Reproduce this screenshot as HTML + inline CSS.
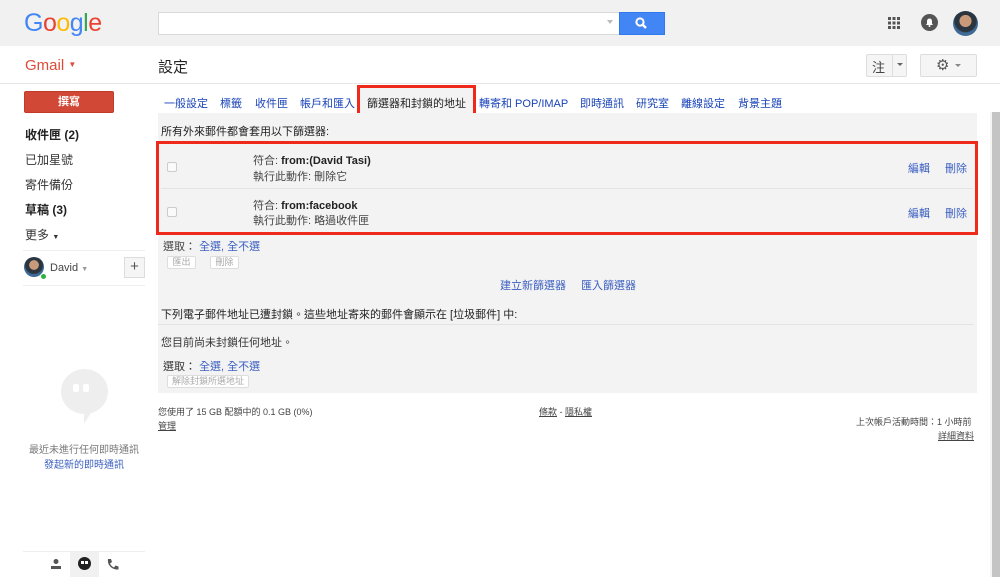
<!DOCTYPE html>
<html><head><meta charset="utf-8"><style>
*{margin:0;padding:0;box-sizing:border-box}
body{width:1000px;height:577px;overflow:hidden;background:#fff;font-family:"Liberation Sans","Noto Sans CJK TC",sans-serif;font-size:11px;color:#222;position:relative}
.a{position:absolute;white-space:nowrap}
.blue{color:#1a44b8}
.lb{color:#3b5fc0}
.btn{position:absolute;border:1px solid #ddd;border-radius:2px;background:#fff;color:#aaa;font-size:9px;text-align:center}
</style></head><body>
<div class="a" style="left:0;top:0;width:1000px;height:46px;background:#f1f1f1"></div>
<div class="a" style="left:24px;top:9px;font-size:25px;letter-spacing:-0.5px;font-family:'Liberation Sans',sans-serif"><span style="color:#4285f4">G</span><span style="color:#ea4335">o</span><span style="color:#fbbc05">o</span><span style="color:#4285f4">g</span><span style="color:#34a853">l</span><span style="color:#ea4335">e</span></div>
<div class="a" style="left:158px;top:12px;width:462px;height:23px;background:#fff;border:1px solid #d9d9d9"></div>
<div class="a" style="left:607px;top:20px;width:0;height:0;border-left:3px solid transparent;border-right:3px solid transparent;border-top:4px solid #bbb"></div>
<div class="a" style="left:619px;top:12px;width:46px;height:23px;background:#4285f4;border:1px solid #3079ed"></div>
<svg class="a" style="left:634px;top:16px" width="16" height="15" viewBox="0 0 16 15"><circle cx="6" cy="6" r="3.6" stroke="#fff" stroke-width="2" fill="none"/><path d="M8.5 8.5L12 12" stroke="#fff" stroke-width="2.4"/></svg>
<svg class="a" style="left:888px;top:17px" width="12" height="12"><g fill="#555"><rect x="0" y="0" width="3" height="3"/><rect x="4.5" y="0" width="3" height="3"/><rect x="9" y="0" width="3" height="3"/><rect x="0" y="4.5" width="3" height="3"/><rect x="4.5" y="4.5" width="3" height="3"/><rect x="9" y="4.5" width="3" height="3"/><rect x="0" y="9" width="3" height="3"/><rect x="4.5" y="9" width="3" height="3"/><rect x="9" y="9" width="3" height="3"/></g></svg>
<svg class="a" style="left:921px;top:14px" width="17" height="17"><circle cx="8.5" cy="8.5" r="8.5" fill="#555"/><path d="M5 11h7l-1-1.5V7a2.5 2.5 0 0 0-5 0v2.5z" fill="#fff"/><circle cx="8.5" cy="12" r="1" fill="#fff"/></svg>
<div class="a" style="left:953px;top:11px;width:25px;height:25px;border-radius:50%;background:radial-gradient(circle at 50% 40%,#c99a7a 0 30%,#2b3540 32% 55%,#3e6a96 60%);"></div>
<div class="a" style="left:0;top:46px;width:1000px;height:38px;border-bottom:1px solid #e5e5e5"></div>
<div class="a" style="left:25px;top:57px;font-size:15px;color:#dd4b39">Gmail <span style="font-size:8px;vertical-align:3px">▼</span></div>
<div class="a" style="left:158px;top:56px;font-size:15px;color:#222">設定</div>
<div class="a" style="left:866px;top:54px;width:41px;height:23px;border:1px solid #ddd;background:#f5f5f5;border-radius:2px"></div>
<div class="a" style="left:872px;top:57px;font-size:13px;color:#444">注</div>
<div class="a" style="left:892px;top:55px;width:1px;height:21px;background:#ddd"></div>
<div class="a" style="left:897px;top:63px;border-left:3px solid transparent;border-right:3px solid transparent;border-top:3px solid #666"></div>
<div class="a" style="left:920px;top:54px;width:57px;height:23px;border:1px solid #ddd;background:#f5f5f5;border-radius:2px"></div>
<div class="a" style="left:936px;top:56px;font-size:15px;color:#555">⚙</div>
<div class="a" style="left:955px;top:64px;border-left:3px solid transparent;border-right:3px solid transparent;border-top:3px solid #888"></div>
<div class="a" style="left:24px;top:91px;width:90px;height:22px;background:#d14836;border:1px solid #c13b2a;border-radius:2px;color:#fff;font-weight:bold;text-align:center;line-height:20px;font-size:11px">撰寫</div>
<div class="a" style="left:25px;top:126px;font-size:12px;font-weight:bold">收件匣 (2)</div>
<div class="a" style="left:25px;top:151px;font-size:12px;color:#333">已加星號</div>
<div class="a" style="left:25px;top:176px;font-size:12px;color:#333">寄件備份</div>
<div class="a" style="left:25px;top:201px;font-size:12px;font-weight:bold">草稿 (3)</div>
<div class="a" style="left:25px;top:226px;font-size:12px;color:#333">更多 <span style="font-size:7px">▼</span></div>
<div class="a" style="left:23px;top:250px;width:122px;height:1px;background:#eee"></div>
<div class="a" style="left:24px;top:257px;width:20px;height:20px;border-radius:50%;background:radial-gradient(circle at 50% 40%,#c99a7a 0 30%,#2b3540 32% 55%,#3e6a96 60%)"></div>
<div class="a" style="left:40px;top:273px;width:7px;height:7px;border-radius:50%;background:#2bb33b;border:1px solid #fff"></div>
<div class="a" style="left:50px;top:262px;font-size:11px;color:#444">David <span style="font-size:7px;color:#999">▼</span></div>
<div class="a" style="left:124px;top:257px;width:21px;height:21px;border:1px solid #ddd;background:#f5f5f5;text-align:center;line-height:18px;font-size:15px;color:#555">+</div>
<div class="a" style="left:23px;top:285px;width:122px;height:1px;background:#eee"></div>
<div class="a" style="left:61px;top:369px;width:47px;height:45px;border-radius:50%;background:#eee"></div>
<div class="a" style="left:84px;top:408px;width:0;height:0;border-top:16px solid #eee;border-right:10px solid transparent"></div>
<div class="a" style="left:73px;top:384px;width:6px;height:8px;background:#fff;border-radius:2px"></div>
<div class="a" style="left:83px;top:384px;width:6px;height:8px;background:#fff;border-radius:2px"></div>
<div class="a" style="left:29px;top:441px;font-size:10px;color:#777">最近未進行任何即時通訊</div>
<div class="a" style="left:44px;top:456px;font-size:10px;color:#3b5fc0">發起新的即時通訊</div>
<div class="a" style="left:23px;top:551px;width:122px;height:1px;background:#eee"></div>
<div class="a" style="left:70px;top:552px;width:29px;height:25px;background:#f1f1f1"></div>
<svg class="a" style="left:50px;top:558px" width="12" height="12"><circle cx="6" cy="3.5" r="2.5" fill="#555"/><rect x="1" y="8" width="10" height="3" fill="#555"/></svg>
<div class="a" style="left:78px;top:557px;width:13px;height:13px;border-radius:50%;background:#222"></div>
<div class="a" style="left:81px;top:561px;width:3px;height:3px;background:#fff"></div>
<div class="a" style="left:85px;top:561px;width:3px;height:3px;background:#fff"></div>
<svg class="a" style="left:106px;top:558px" width="13" height="13"><path d="M2 1l3 0 1 3-2 1.5c1 2 2 3 4 4L9.5 7.5l3 1 0 3C6 12 1 7 2 1z" fill="#555"/></svg>
<div class="a blue" style="left:164px;top:95px;font-size:11px">一般設定</div>
<div class="a blue" style="left:220px;top:95px">標籤</div>
<div class="a blue" style="left:255px;top:95px">收件匣</div>
<div class="a blue" style="left:300px;top:95px">帳戶和匯入</div>
<div class="a" style="left:357px;top:85px;width:119px;height:32px;border:3px solid #f02a1a"></div>
<div class="a" style="left:360px;top:88px;width:113px;height:26px;background:#f3f3f3"></div>
<div class="a" style="left:367px;top:95px;color:#222">篩選器和封鎖的地址</div>
<div class="a blue" style="left:479px;top:95px">轉寄和 POP/IMAP</div>
<div class="a blue" style="left:580px;top:95px">即時通訊</div>
<div class="a blue" style="left:636px;top:95px">研究室</div>
<div class="a blue" style="left:681px;top:95px">離線設定</div>
<div class="a blue" style="left:738px;top:95px">背景主題</div>
<div class="a" style="left:158px;top:113px;width:819px;height:280px;background:#f3f3f3"></div>
<div class="a" style="left:161px;top:123px;color:#222">所有外來郵件都會套用以下篩選器:</div>
<div class="a" style="left:156px;top:141px;width:822px;height:94px;border:3px solid #f02a1a"></div>
<div class="a" style="left:161px;top:188px;width:812px;height:1px;background:#e3e3e3"></div>
<div class="a" style="left:167px;top:162px;width:10px;height:10px;border:1px solid #ccc;border-radius:2px;background:#fafafa"></div>
<div class="a" style="left:167px;top:207px;width:10px;height:10px;border:1px solid #ccc;border-radius:2px;background:#fafafa"></div>
<div class="a" style="left:253px;top:152px;color:#444">符合: <b style="color:#222">from:(David Tasi)</b></div>
<div class="a" style="left:253px;top:168px;color:#444">執行此動作: 刪除它</div>
<div class="a" style="left:253px;top:197px;color:#444">符合: <b style="color:#222">from:facebook</b></div>
<div class="a" style="left:253px;top:212px;color:#444">執行此動作: 略過收件匣</div>
<div class="a lb" style="left:908px;top:160px">編輯</div><div class="a lb" style="left:945px;top:160px">刪除</div>
<div class="a lb" style="left:908px;top:205px">編輯</div><div class="a lb" style="left:945px;top:205px">刪除</div>
<div class="a" style="left:163px;top:238px;color:#444">選取： <span class="lb">全選, 全不選</span></div>
<div class="btn" style="left:167px;top:256px;width:29px;height:13px;line-height:11px">匯出</div>
<div class="btn" style="left:210px;top:256px;width:29px;height:13px;line-height:11px">刪除</div>
<div class="a lb" style="left:500px;top:277px">建立新篩選器</div>
<div class="a lb" style="left:581px;top:277px">匯入篩選器</div>
<div class="a" style="left:161px;top:306px;color:#222">下列電子郵件地址已遭封鎖。這些地址寄來的郵件會顯示在 [垃圾郵件] 中:</div>
<div class="a" style="left:158px;top:324px;width:816px;height:1px;background:#e3e3e3"></div>
<div class="a" style="left:161px;top:334px;color:#333">您目前尚未封鎖任何地址。</div>
<div class="a" style="left:163px;top:358px;color:#333">選取： <span class="lb">全選, 全不選</span></div>
<div class="btn" style="left:167px;top:375px;width:82px;height:13px;line-height:11px">解除封鎖所選地址</div>
<div class="a" style="left:158px;top:405px;font-size:9px;color:#444">您使用了 15 GB 配額中的 0.1 GB (0%)</div>
<div class="a" style="left:158px;top:419px;font-size:9px;color:#444;text-decoration:underline">管理</div>
<div class="a" style="left:539px;top:405px;font-size:9px;color:#444"><u>條款</u> - <u>隱私權</u></div>
<div class="a" style="left:856px;top:415px;font-size:9px;color:#444">上次帳戶活動時間：1 小時前</div>
<div class="a" style="left:938px;top:429px;font-size:9px;color:#444;text-decoration:underline">詳細資料</div>
<div class="a" style="left:990px;top:112px;width:10px;height:465px;background:#f5f5f5"></div>
<div class="a" style="left:992px;top:112px;width:8px;height:465px;background:#c4c4c4"></div>
</body></html>
